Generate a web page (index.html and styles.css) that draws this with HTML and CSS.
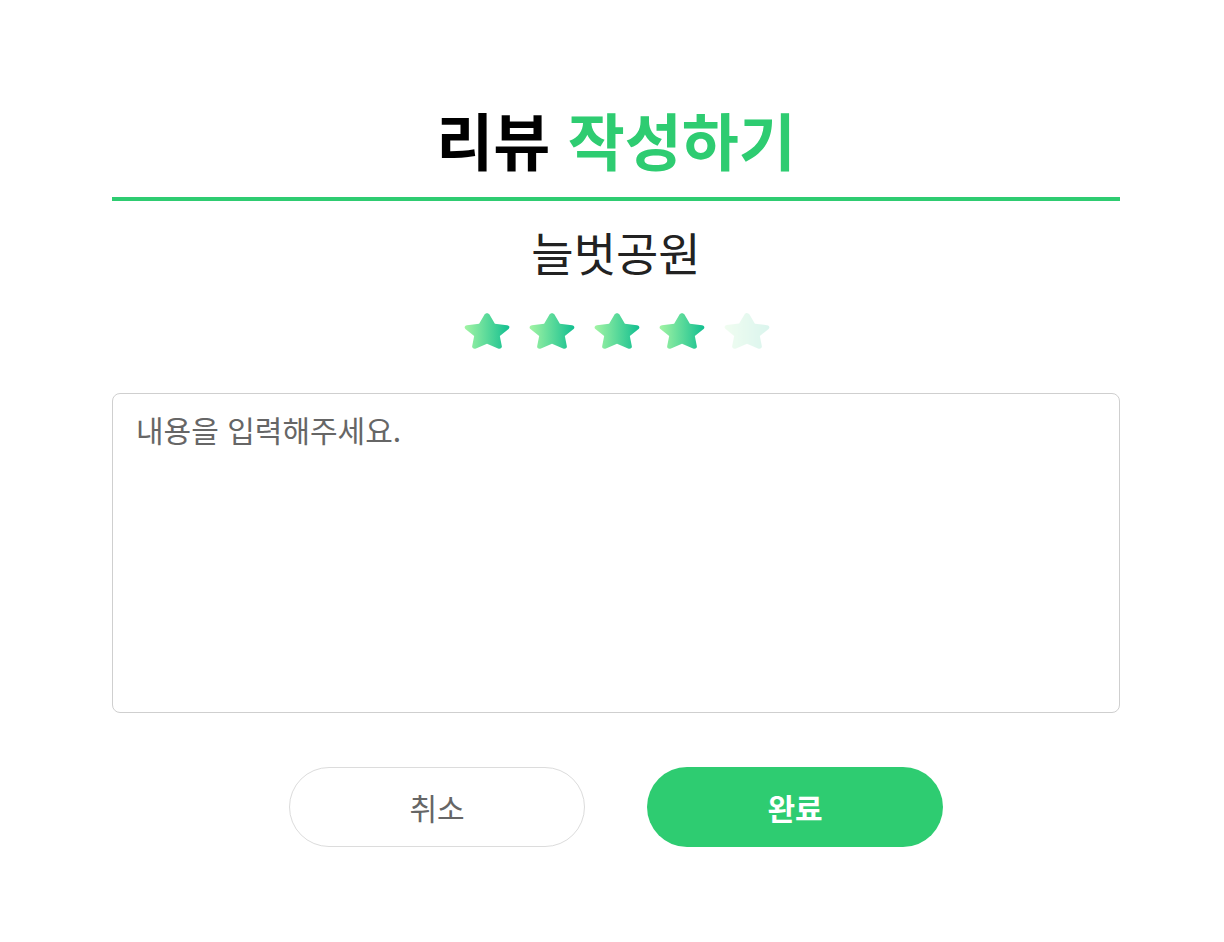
FILE: index.html
```html
<!DOCTYPE html>
<html lang="ko">
<head>
<meta charset="utf-8">
<title>리뷰 작성하기</title>
<link rel="stylesheet" href="styles.css">
</head>
<body>
<main class="review">
  <h1 class="review__title">리뷰 <span class="accent">작성하기</span></h1>
  <h2 class="review__place">늘벗공원</h2>
  <div class="stars">
    <svg width="0" height="0" class="defs" aria-hidden="true">
      <defs>
        <linearGradient id="starGrad" x1="0" y1="0" x2="1" y2="0">
          <stop offset="0" stop-color="#a2f4a4"/>
          <stop offset="1" stop-color="#12bf90"/>
        </linearGradient>
      </defs>
    </svg>
    <svg class="star" viewBox="0 0 24 24" preserveAspectRatio="none"><path d="M12 2.2c.5 0 .9.3 1.1.7l2.4 4.9 5.4.8c1 .1 1.4 1.3.7 2l-3.9 3.8.9 5.4c.2 1-.8 1.7-1.7 1.2L12 18.5l-4.9 2.5c-.9.5-1.9-.2-1.7-1.2l.9-5.4-3.9-3.8c-.7-.7-.3-1.9.7-2l5.4-.8 2.4-4.9c.2-.4.6-.7 1.1-.7z" fill="url(#starGrad)"/></svg>
    <svg class="star" viewBox="0 0 24 24" preserveAspectRatio="none"><path d="M12 2.2c.5 0 .9.3 1.1.7l2.4 4.9 5.4.8c1 .1 1.4 1.3.7 2l-3.9 3.8.9 5.4c.2 1-.8 1.7-1.7 1.2L12 18.5l-4.9 2.5c-.9.5-1.9-.2-1.7-1.2l.9-5.4-3.9-3.8c-.7-.7-.3-1.9.7-2l5.4-.8 2.4-4.9c.2-.4.6-.7 1.1-.7z" fill="url(#starGrad)"/></svg>
    <svg class="star" viewBox="0 0 24 24" preserveAspectRatio="none"><path d="M12 2.2c.5 0 .9.3 1.1.7l2.4 4.9 5.4.8c1 .1 1.4 1.3.7 2l-3.9 3.8.9 5.4c.2 1-.8 1.7-1.7 1.2L12 18.5l-4.9 2.5c-.9.5-1.9-.2-1.7-1.2l.9-5.4-3.9-3.8c-.7-.7-.3-1.9.7-2l5.4-.8 2.4-4.9c.2-.4.6-.7 1.1-.7z" fill="url(#starGrad)"/></svg>
    <svg class="star" viewBox="0 0 24 24" preserveAspectRatio="none"><path d="M12 2.2c.5 0 .9.3 1.1.7l2.4 4.9 5.4.8c1 .1 1.4 1.3.7 2l-3.9 3.8.9 5.4c.2 1-.8 1.7-1.7 1.2L12 18.5l-4.9 2.5c-.9.5-1.9-.2-1.7-1.2l.9-5.4-3.9-3.8c-.7-.7-.3-1.9.7-2l5.4-.8 2.4-4.9c.2-.4.6-.7 1.1-.7z" fill="url(#starGrad)"/></svg>
    <svg class="star star--off" viewBox="0 0 24 24" preserveAspectRatio="none"><path d="M12 2.2c.5 0 .9.3 1.1.7l2.4 4.9 5.4.8c1 .1 1.4 1.3.7 2l-3.9 3.8.9 5.4c.2 1-.8 1.7-1.7 1.2L12 18.5l-4.9 2.5c-.9.5-1.9-.2-1.7-1.2l.9-5.4-3.9-3.8c-.7-.7-.3-1.9.7-2l5.4-.8 2.4-4.9c.2-.4.6-.7 1.1-.7z" fill="url(#starGrad)"/></svg>
  </div>
  <textarea class="review__text" placeholder="내용을 입력해주세요."></textarea>
  <div class="actions">
    <button class="btn btn--cancel" type="button">취소</button>
    <button class="btn btn--done" type="button">완료</button>
  </div>
</main>
</body>
</html>
```

FILE: styles.css
```css
* { box-sizing: border-box; }
html, body { margin: 0; padding: 0; background: #fff; }
body {
  padding-left: 8px;
  font-family: "Noto Sans CJK KR", "Noto Sans", sans-serif;
  color: #222;
}
.review {
  width: 1008px;
  margin: 0 auto;
  padding-top: 91px;
  display: flex;
  flex-direction: column;
  align-items: stretch;
}
.review__title {
  margin: 0;
  font-size: 62px;
  font-weight: 700;
  line-height: 96px;
  text-align: center;
  color: #000;
  border-bottom: 4px solid #2ecc71;
  padding-bottom: 10px;
}
.accent { color: #2ecc71; }
.review__place {
  margin: 20px 0 0;
  font-size: 46px;
  font-weight: 400;
  line-height: 60px;
  text-align: center;
  color: #222;
}
.stars {
  display: flex;
  justify-content: center;
  gap: 11px;
  margin-top: 28px;
  padding-left: 2px;
}
.defs { position: absolute; }
.star { width: 54px; height: 45px; display: block; }
.star--off { opacity: 0.15; }
.review__text {
  margin-top: 39px;
  width: 100%;
  height: 320px;
  border: 1.5px solid #cfcfcf;
  border-radius: 8px;
  padding: 13px 23px;
  font-family: "Noto Sans CJK KR", "Noto Sans", sans-serif;
  font-size: 30px;
  line-height: 44px;
  resize: none;
  outline: none;
  color: #222;
}
.review__text::placeholder { color: #666; }
.actions {
  display: flex;
  justify-content: center;
  gap: 62px;
  margin-top: 54px;
}
.btn {
  width: 296px;
  height: 80px;
  border-radius: 40px;
  font-family: "Noto Sans CJK KR", "Noto Sans", sans-serif;
  font-size: 30px;
  cursor: pointer;
}
.btn--cancel {
  background: #fff;
  border: 1.5px solid #dcdcdc;
  color: #666;
  font-weight: 400;
}
.btn--done {
  background: #2ecc71;
  border: none;
  color: #fff;
  font-weight: 700;
}
```
